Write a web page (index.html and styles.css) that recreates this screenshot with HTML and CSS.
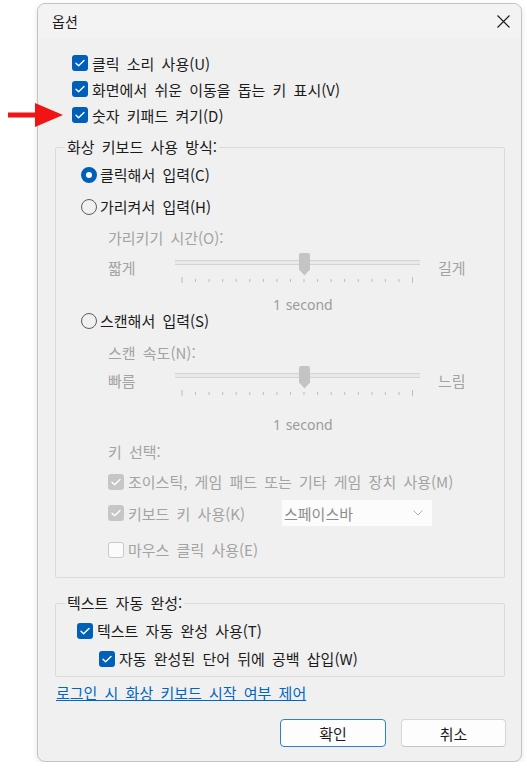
FILE: index.html
```html
<!DOCTYPE html>
<html lang="ko">
<head>
    <meta charset="UTF-8">
    <meta name="viewport" content="width=device-width, initial-scale=1.0">
    <title>옵션</title>
    <link rel="stylesheet" href="styles.css">
</head>
<body>
    <svg class="arrow" viewBox="0 0 55 24" width="55" height="24">
        <rect x="0" y="9.5" width="29" height="5" fill="#f01414"/>
        <polygon points="27,0 55,12 27,24" fill="#f01414"/>
    </svg>

    <div class="dialog">
        <div class="titlebar">
            <span class="title">옵션</span>
            <svg class="close" viewBox="0 0 13 13" width="13" height="13">
                <path d="M0.5 0.5L12.5 12.5M12.5 0.5L0.5 12.5"/>
            </svg>
        </div>

        <div class="checks">
            <label class="row"><span class="box on"><svg viewBox="0 0 16 16"><path d="M4 8.3l2.6 2.5L12 5.4"/></svg></span>클릭 소리 사용(U)</label>
            <label class="row"><span class="box on"><svg viewBox="0 0 16 16"><path d="M4 8.3l2.6 2.5L12 5.4"/></svg></span>화면에서 쉬운 이동을 돕는 키 표시(V)</label>
            <label class="row"><span class="box on"><svg viewBox="0 0 16 16"><path d="M4 8.3l2.6 2.5L12 5.4"/></svg></span>숫자 키패드 켜기(D)</label>
        </div>

        <fieldset class="group group-mode">
            <legend>화상 키보드 사용 방식:</legend>

            <label class="line radio-row r1"><span class="radio on"></span>클릭해서 입력(C)</label>
            <label class="line radio-row r2"><span class="radio"></span>가리켜서 입력(H)</label>

            <div class="line sub dim l-hover">가리키기 시간(O):</div>
            <div class="slider s1">
                <span class="end dim">짧게</span>
                <div class="track-wrap">
                    <div class="track"></div>
                    <svg class="ticks" viewBox="0 0 245 8" width="245" height="8">
                        <path d="M7 0v6M20.5 2v3M34.1 2v3M47.7 2v3M61.2 2v3M74.8 2v3M88.4 2v3M101.9 2v3M115.5 2v3M129 2v3M142.6 2v3M156.2 2v3M169.7 2v3M183.3 2v3M196.9 2v3M210.4 2v3M224 2v3M237.5 0v6"/>
                    </svg>
                    <svg class="thumb" viewBox="0 0 11 23" width="11" height="23">
                        <path d="M0 2Q0 0 2 0H9Q11 0 11 2V16.5L5.5 22.5L0 16.5Z"/>
                    </svg>
                </div>
                <span class="end end-right dim">길게</span>
            </div>
            <div class="second s-first">1 second</div>

            <label class="radio-row r3"><span class="radio"></span>스캔해서 입력(S)</label>

            <div class="line sub dim l-scan">스캔 속도(N):</div>
            <div class="slider s2">
                <span class="end dim">빠름</span>
                <div class="track-wrap">
                    <div class="track"></div>
                    <svg class="ticks" viewBox="0 0 245 8" width="245" height="8">
                        <path d="M7 0v6M20.5 2v3M34.1 2v3M47.7 2v3M61.2 2v3M74.8 2v3M88.4 2v3M101.9 2v3M115.5 2v3M129 2v3M142.6 2v3M156.2 2v3M169.7 2v3M183.3 2v3M196.9 2v3M210.4 2v3M224 2v3M237.5 0v6"/>
                    </svg>
                    <svg class="thumb" viewBox="0 0 11 23" width="11" height="23">
                        <path d="M0 2Q0 0 2 0H9Q11 0 11 2V16.5L5.5 22.5L0 16.5Z"/>
                    </svg>
                </div>
                <span class="end end-right dim">느림</span>
            </div>
            <div class="second s-second">1 second</div>

            <div class="line sub dim l-keys">키 선택:</div>

            <label class="line row-sub dim l-joy"><span class="box off-on"><svg viewBox="0 0 16 16"><path d="M4 8.3l2.6 2.5L12 5.4"/></svg></span>조이스틱, 게임 패드 또는 기타 게임 장치 사용(M)</label>

            <div class="key-row">
                <label class="key-label dim"><span class="box off-on"><svg viewBox="0 0 16 16"><path d="M4 8.3l2.6 2.5L12 5.4"/></svg></span>키보드 키 사용(K)</label>
                <div class="select">
                    <span>스페이스바</span>
                    <svg viewBox="0 0 10 6" width="10" height="6"><path d="M0.5 0.5L5 5L9.5 0.5"/></svg>
                </div>
            </div>

            <label class="line row-sub dim l-mouse"><span class="box off"></span>마우스 클릭 사용(E)</label>
        </fieldset>

        <fieldset class="group group-text">
            <legend>텍스트 자동 완성:</legend>
            <label class="line t1"><span class="box on"><svg viewBox="0 0 16 16"><path d="M4 8.3l2.6 2.5L12 5.4"/></svg></span>텍스트 자동 완성 사용(T)</label>
            <label class="line t2"><span class="box on"><svg viewBox="0 0 16 16"><path d="M4 8.3l2.6 2.5L12 5.4"/></svg></span>자동 완성된 단어 뒤에 공백 삽입(W)</label>
        </fieldset>

        <a class="link" href="#">로그인 시 화상 키보드 시작 여부 제어</a>

        <div class="buttons">
            <button class="btn btn-default">확인</button>
            <button class="btn">취소</button>
        </div>
    </div>
</body>
</html>
```

FILE: styles.css
```css
body {
    margin: 0;
    background-color: #ffffff;
    font-family: "Noto Sans CJK KR", "Noto Sans", sans-serif;
    font-size: 15px;
    word-spacing: 3px;
    color: #1b1b1b;
    position: relative;
}

/* flèche rouge posée sur la capture */
.arrow {
    position: absolute;
    left: 8px;
    top: 103px;
}

.dialog {
    box-sizing: border-box;
    margin: 3px 0 0 37px;
    width: 485px;
    height: 759px;
    border: 1px solid #c3c3c3;
    border-radius: 8px;
    background-color: #f0f0f0;
    box-shadow: 0 2px 6px rgba(0, 0, 0, 0.10);
    display: flex;
    flex-direction: column;
}

.titlebar {
    height: 34px;
    display: flex;
    align-items: center;
    justify-content: space-between;
    padding: 0 11px 0 14px;
    background-color: #f3f3f3;
    border-radius: 8px 8px 0 0;
}

.title {
    font-size: 14px;
}

.close path {
    stroke: #1b1b1b;
    stroke-width: 1.1;
    fill: none;
}

/* cases à cocher */
.checks {
    margin-top: 12px;
    padding-left: 34px;
}

.row {
    display: flex;
    align-items: center;
    height: 26px;
}

.box {
    box-sizing: border-box;
    width: 16px;
    height: 16px;
    border-radius: 3px;
    margin-right: 4px;
    flex: none;
    display: flex;
}

.box svg {
    width: 16px;
    height: 16px;
}

.box path {
    fill: none;
    stroke: #ffffff;
    stroke-width: 1.4;
    stroke-linecap: round;
    stroke-linejoin: round;
}

.box.on {
    background-color: #005fb8;
}

.box.off-on {
    background-color: #c6c6c6;
}

.box.off {
    border: 1px solid #c8c8c8;
    background-color: #fbfbfb;
}

.radio {
    box-sizing: border-box;
    width: 16px;
    height: 16px;
    border-radius: 50%;
    border: 1px solid #5d5d5d;
    margin-right: 3px;
    flex: none;
}

.radio.on {
    border: 5px solid #005fb8;
    background-color: #ffffff;
}

/* cadres de groupe */
.group {
    box-sizing: border-box;
    width: 450px;
    margin: 9px 0 0 17px;
    padding: 0 0 17px 0;
    border: 1px solid #dadada;
    border-radius: 2px;
    min-width: 0;
}

.group legend {
    margin-left: 9px;
    padding: 0 2px;
    line-height: 20px;
}

.line {
    display: flex;
    align-items: center;
    height: 20px;
    line-height: 20px;
}

.dim {
    color: #a3a3a3;
}

.radio-row {
    display: flex;
    align-items: center;
    margin-left: 25px;
}

.r1 { margin-top: 8px; }
.r2 { margin-top: 12px; }
.r3 { margin-top: 0; height: 16px; line-height: 16px; }

.sub {
    margin-left: 52px;
}

.l-hover { margin-top: 11px; }
.l-scan { margin-top: 14px; }
.l-keys { margin-top: 9px; }

.slider {
    display: grid;
    grid-template-columns: 67px 245px auto;
    height: 33px;
    margin-left: 52px;
}

.s1 { margin-top: 4px; }
.s2 { margin-top: 2px; }

.end {
    padding-top: 6px;
    line-height: 20px;
}

.end-right {
    margin-left: 18px;
}

.track-wrap {
    position: relative;
    display: flex;
    flex-direction: column;
}

.track {
    box-sizing: border-box;
    height: 5px;
    margin-top: 8px;
    border-top: 1px solid #d3d3d3;
    border-bottom: 1px solid #d3d3d3;
    background-color: #e9e9e9;
}

.ticks {
    margin-top: 12px;
}

.ticks path {
    stroke: #bdbdbd;
    stroke-width: 1;
}

.thumb {
    position: absolute;
    left: 124px;
    top: 1px;
}

.thumb path {
    fill: #c4c4c4;
}

.second {
    font-family: "Noto Sans", sans-serif;
    font-size: 14px;
    word-spacing: 1px;
    color: #9c9c9c;
    height: 16px;
    line-height: 16px;
    margin-left: 217px;
}

.s-first { margin-top: 12px; }
.s-second { margin-top: 19px; }

.row-sub {
    margin-left: 52px;
}

.l-joy { margin-top: 10px; }
.l-mouse { margin-top: 14px; }

.key-row {
    display: flex;
    align-items: center;
    height: 26px;
    margin: 8px 0 0 52px;
}

.key-label {
    display: flex;
    align-items: center;
    width: 174px;
}

.select {
    box-sizing: border-box;
    width: 150px;
    height: 26px;
    display: flex;
    align-items: center;
    justify-content: space-between;
    padding: 0 9px 0 2px;
    background-color: #fcfcfc;
    color: #8c8c8c;
}

.select path {
    fill: none;
    stroke: #b0b0b0;
    stroke-width: 1;
}

.group-text {
    margin-top: 15px;
    padding-bottom: 7px;
}

.t1 {
    margin: 8px 0 0 21px;
}

.t2 {
    margin: 8px 0 0 43px;
}

.link {
    align-self: flex-start;
    margin: 6px 0 0 18px;
    line-height: 20px;
    color: #0067c0;
    text-decoration: underline;
}

.buttons {
    display: flex;
    justify-content: flex-end;
    gap: 15px;
    margin: 16px 15px 0 0;
}

.btn {
    box-sizing: border-box;
    width: 105px;
    height: 28px;
    font-family: inherit;
    font-size: 15px;
    color: #1b1b1b;
    background-color: #fdfdfd;
    border: 1px solid #d6d6d6;
    border-bottom-color: #c4c4c4;
    border-radius: 4px;
    padding: 0;
}

.btn-default {
    width: 106px;
    border: 1px solid #2f7fcf;
}
```
